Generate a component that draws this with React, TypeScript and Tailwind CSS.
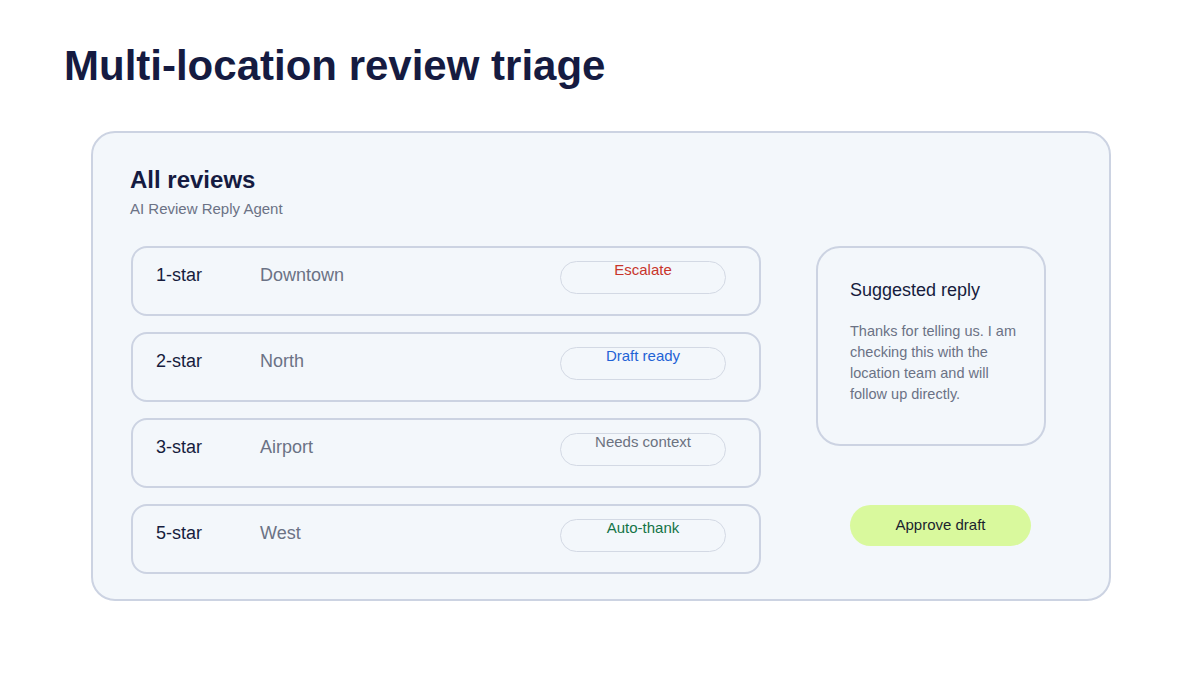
import React from 'react';

type Review = {
  stars: string;
  location: string;
  status: string;
  tone: string;
};

const reviews: Review[] = [
  { stars: '1-star', location: 'Downtown', status: 'Escalate', tone: 'text-[#c8352b]' },
  { stars: '2-star', location: 'North', status: 'Draft ready', tone: 'text-[#1f63d6]' },
  { stars: '3-star', location: 'Airport', status: 'Needs context', tone: 'text-[#6b7280]' },
  { stars: '5-star', location: 'West', status: 'Auto-thank', tone: 'text-[#137447]' },
];

const ReviewRow: React.FC<{ review: Review }> = ({ review }) => (
  <div className="h-[70px] w-[630px] rounded-[16px] border-2 border-[#ccd3e2] flex items-start">
    <div className="w-[127px] pl-[23px] pt-[17px] text-[18px] leading-[20px] text-[#161c3d]">{review.stars}</div>
    <div className="w-[300px] pt-[17px] text-[18px] leading-[20px] text-[#6b7285]">{review.location}</div>
    <div className="mt-[13px] h-[33px] w-[166px] rounded-full border border-[#d3d9e4] text-center">
      <span className={`block text-[15px] leading-[16px] ${review.tone}`}>{review.status}</span>
    </div>
  </div>
);

const App: React.FC = () => {
  return (
    <div className="w-[1200px] h-[675px] bg-white font-['Liberation_Sans',Arial,sans-serif] overflow-hidden">
      <h1 className="pl-[64px] pt-[40px] text-[42px] leading-[52px] font-bold text-[#151b41]">
        Multi-location review triage
      </h1>

      <div className="ml-[91px] mt-[39px] w-[1020px] h-[470px] rounded-[24px] border-2 border-[#ccd3e2] bg-[#f3f7fb] pl-[37px] pt-[32px]">
        <h2 className="text-[24px] leading-[30px] font-bold text-[#151b41]">All reviews</h2>
        <p className="mt-[5px] text-[15px] leading-[18px] text-[#6b7285]">AI Review Reply Agent</p>

        <div className="mt-[28px] ml-[1px] flex gap-[55px]">
          <div className="flex flex-col gap-[16px]">
            {reviews.map(r => (
              <ReviewRow key={r.stars} review={r} />
            ))}
          </div>

          <div className="flex flex-col">
            <div className="h-[200px] w-[230px] rounded-[24px] border-2 border-[#ccd3e2] pl-[32px] pr-[22px] pt-[31px]">
              <div className="text-[18px] leading-[22px] text-[#161c3d]">Suggested reply</div>
              <p className="mt-[20px] text-[14.5px] leading-[21px] text-[#6b7285]">
                Thanks for telling us. I am checking this with the location team and will follow up directly.
              </p>
            </div>
            <button className="mt-[59px] ml-[34px] h-[41px] w-[181px] rounded-full bg-[#d9f99d] text-[15px] text-[#1b1f2e]">
              Approve draft
            </button>
          </div>
        </div>
      </div>
    </div>
  );
};

export default App;
